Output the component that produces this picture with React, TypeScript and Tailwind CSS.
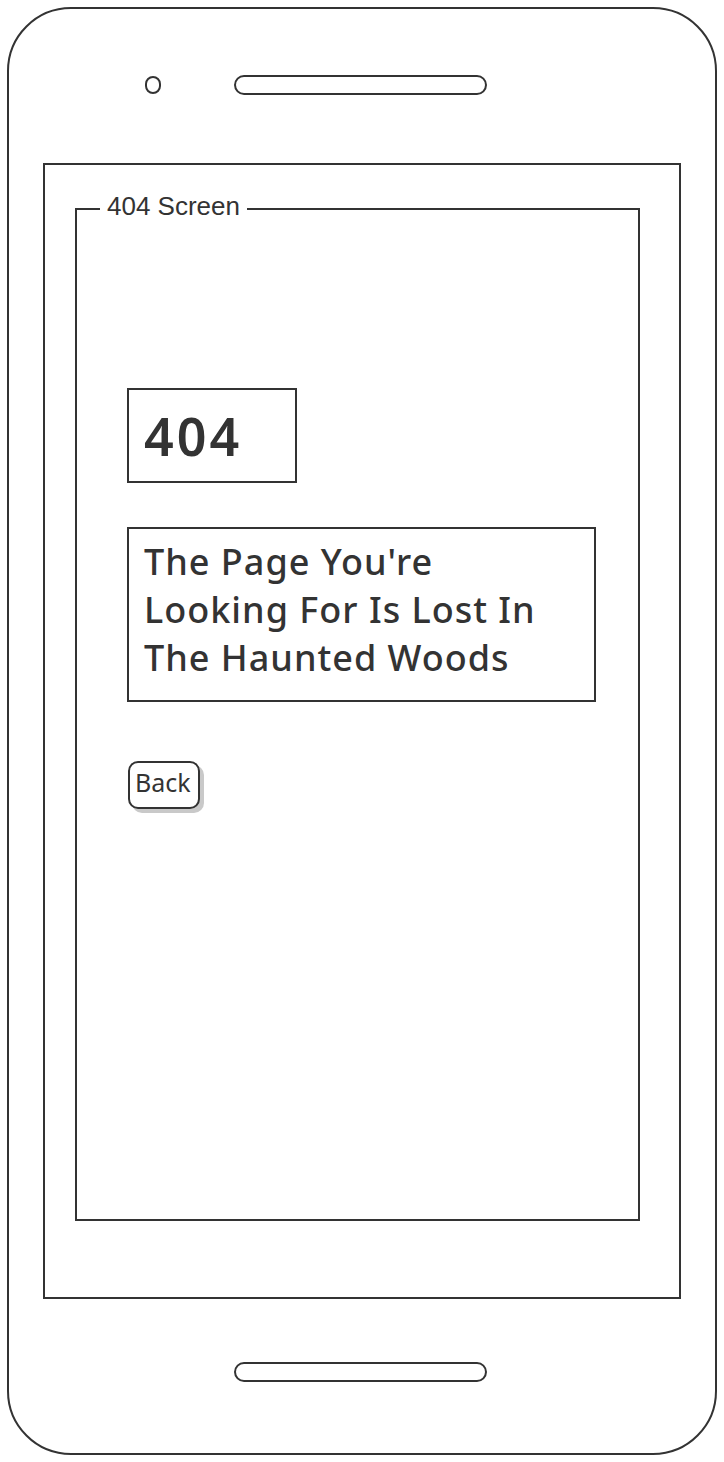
export default function App() {
  const ink = "border-[#333]";
  return (
    <div className="w-[724px] h-[1462px] bg-white pt-[7px] pl-[7px] text-[#333] font-['Noto_Sans',sans-serif]">
      {/* phone body */}
      <div className={`w-[710px] h-[1448px] border-[2.5px] ${ink} rounded-[64px] flex flex-col`}>
        {/* camera + speaker */}
        <div className="mt-[66px] h-[20px] flex items-center">
          <div className={`ml-[136px] w-[16px] h-[18px] rounded-full border-[2.5px] ${ink}`} />
          <div className={`ml-[73px] w-[253px] h-[20px] rounded-full border-2 ${ink}`} />
        </div>

        {/* screen */}
        <div className={`ml-[34px] mt-[68px] w-[638px] h-[1136px] border-2 ${ink}`}>
          <div className={`relative ml-[30px] mt-[43px] w-[565px] h-[1013px] border-2 ${ink} flex flex-col`}>
            <span className="absolute left-[23px] top-[-19px] bg-white px-[7px] text-[26px] leading-[30px] font-['Liberation_Sans',sans-serif]">
              404 Screen
            </span>

            <div className={`ml-[50px] mt-[178px] w-[170px] h-[95px] border-2 ${ink} flex items-center pl-[15px]`}>
              <span className="text-[52px] leading-none font-semibold tracking-[3px]">404</span>
            </div>

            <div className={`ml-[50px] mt-[44px] w-[469px] h-[175px] border-2 ${ink} pl-[15px] pt-[9px]`}>
              <p className="text-[36px] leading-[48px] font-medium tracking-[1px]">
                The Page You're
                <br />
                Looking For Is Lost In
                <br />
                The Haunted Woods
              </p>
            </div>

            <button
              className={`ml-[51px] mt-[59px] w-[72px] h-[48px] border-2 ${ink} rounded-[10px] bg-white shadow-[4px_4px_0_#c9c9c9] text-[25px] leading-none text-left pl-[5px] pb-[5px]`}
            >
              Back
            </button>
          </div>
        </div>

        {/* bottom speaker */}
        <div className={`ml-[225px] mt-[63px] w-[253px] h-[20px] rounded-full border-2 ${ink}`} />
      </div>
    </div>
  );
}
